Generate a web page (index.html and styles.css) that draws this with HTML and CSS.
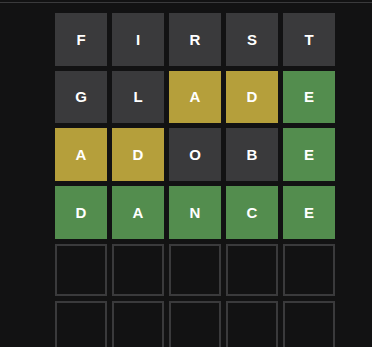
FILE: index.html
```html
<!DOCTYPE html>
<html>
<head>
<meta charset="utf-8">
<link rel="stylesheet" href="styles.css">
</head>
<body>
<div class="header"></div>
<div class="board">
  <div class="tile absent">F</div><div class="tile absent">I</div><div class="tile absent">R</div><div class="tile absent">S</div><div class="tile absent">T</div>
  <div class="tile absent">G</div><div class="tile absent">L</div><div class="tile present">A</div><div class="tile present">D</div><div class="tile correct">E</div>
  <div class="tile present">A</div><div class="tile present">D</div><div class="tile absent">O</div><div class="tile absent">B</div><div class="tile correct">E</div>
  <div class="tile correct">D</div><div class="tile correct">A</div><div class="tile correct">N</div><div class="tile correct">C</div><div class="tile correct">E</div>
  <div class="tile empty"></div><div class="tile empty"></div><div class="tile empty"></div><div class="tile empty"></div><div class="tile empty"></div>
  <div class="tile empty"></div><div class="tile empty"></div><div class="tile empty"></div><div class="tile empty"></div><div class="tile empty"></div>
</div>
</body>
</html>
```
FILE: styles.css
```css
html, body {
  margin: 0;
  padding: 0;
  background: #121213;
  overflow: hidden;
}
body {
  font-family: "Liberation Sans", Arial, sans-serif;
}
.header {
  height: 2px;
  border-bottom: 1px solid #3a3a3c;
}
.board {
  margin: 10px 0 0 55px;
  width: 280px;
  display: grid;
  grid-template-columns: repeat(5, 52px);
  grid-auto-rows: 52.67px;
  column-gap: 5px;
  row-gap: 5px;
}
.tile {
  box-sizing: border-box;
  display: flex;
  align-items: center;
  justify-content: center;
  color: #ffffff;
  font-weight: bold;
  font-size: 15px;
}
.absent { background: #3a3a3c; }
.present { background: #b59f3b; }
.correct { background: #538d4e; }
.empty { border: 2px solid #3a3a3c; }
```
